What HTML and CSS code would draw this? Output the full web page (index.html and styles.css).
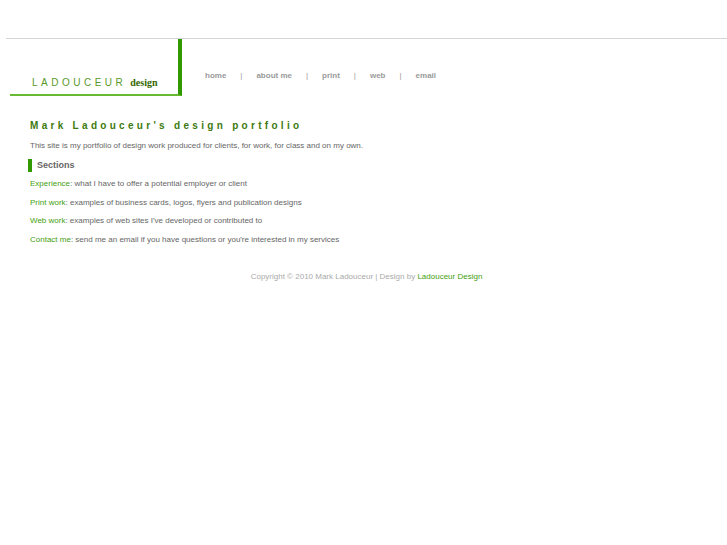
FILE: index.html
```html
<!DOCTYPE html>
<html>
<head>
<meta charset="utf-8">
<title>Ladouceur Design</title>
<link rel="stylesheet" href="styles.css">
</head>
<body>
<div class="page">
  <header class="header">
    <div class="logo">
      <span class="logo-name">LADOUCEUR</span><span class="logo-design">design</span>
    </div>
    <nav class="nav">
      <a href="#">home</a><span class="sep">|</span>
      <a href="#">about me</a><span class="sep">|</span>
      <a href="#">print</a><span class="sep">|</span>
      <a href="#">web</a><span class="sep">|</span>
      <a href="#">email</a>
    </nav>
  </header>
  <main class="content">
    <h1 class="title">Mark Ladouceur's design portfolio</h1>
    <p class="intro">This site is my portfolio of design work produced for clients, for work, for class and on my own.</p>
    <h2 class="sections">Sections</h2>
    <ul class="list">
      <li><a href="#">Experience</a>: what I have to offer a potential employer or client</li>
      <li><a href="#">Print work</a>: examples of business cards, logos, flyers and publication designs</li>
      <li><a href="#">Web work</a>: examples of web sites I've developed or contributed to</li>
      <li><a href="#">Contact me</a>: send me an email if you have questions or you're interested in my services</li>
    </ul>
  </main>
  <footer class="footer">Copyright © 2010 Mark Ladouceur | Design by <a href="#">Ladouceur Design</a></footer>
</div>
</body>
</html>
```
FILE: styles.css
```css
html, body {
  margin: 0;
  padding: 0;
  background: #fff;
}
body {
  font-family: "Liberation Sans", Arial, sans-serif;
  color: #666;
}
a { text-decoration: none; }
.page {
  padding-top: 38px;
  padding-left: 6px;
}
.header {
  display: flex;
  border-top: 1px solid #d4d4d4;
  height: 57px;
}
.logo {
  margin-left: 4px;
  width: 172px;
  box-sizing: border-box;
  border-right: 4px solid #339900;
  border-bottom: 2px solid #66bb33;
  display: flex;
  align-items: flex-end;
  padding-left: 22px;
  padding-bottom: 6px;
}
.logo-name {
  font-size: 10px;
  letter-spacing: 3.5px;
  color: #5a9a2a;
  line-height: 10px;
}
.logo-design {
  font-family: "Liberation Serif", "Times New Roman", serif;
  font-weight: bold;
  font-size: 10px;
  color: #336600;
  margin-left: 4px;
  line-height: 10px;
}
.nav {
  display: flex;
  align-items: center;
  padding-left: 23px;
  padding-top: 15px;
  font-size: 8px;
  font-weight: bold;
}
.nav a { color: #9a9a9a; }
.nav .sep {
  color: #999;
  font-weight: normal;
  margin: 0 14px;
}
.content {
  padding-left: 24px;
}
.title {
  margin: 24px 0 0;
  font-size: 10px;
  letter-spacing: 3.3px;
  color: #3d7a0f;
  line-height: 12px;
}
.intro {
  margin: 9px 0 0;
  font-size: 8px;
  line-height: 10px;
  color: #666;
}
.sections {
  margin: 8px 0 0 -2px;
  border-left: 4px solid #339900;
  padding-left: 5px;
  font-size: 9px;
  line-height: 13px;
  color: #666;
}
.list {
  list-style: none;
  margin: 7px 0 0;
  padding: 0;
  font-size: 8px;
  line-height: 10px;
}
.list li { margin-bottom: 8.5px; }
.list a { color: #44a010; }
.footer {
  margin-top: 27px;
  text-align: center;
  font-size: 8px;
  color: #aaa;
}
.footer a { color: #44a010; }
```
